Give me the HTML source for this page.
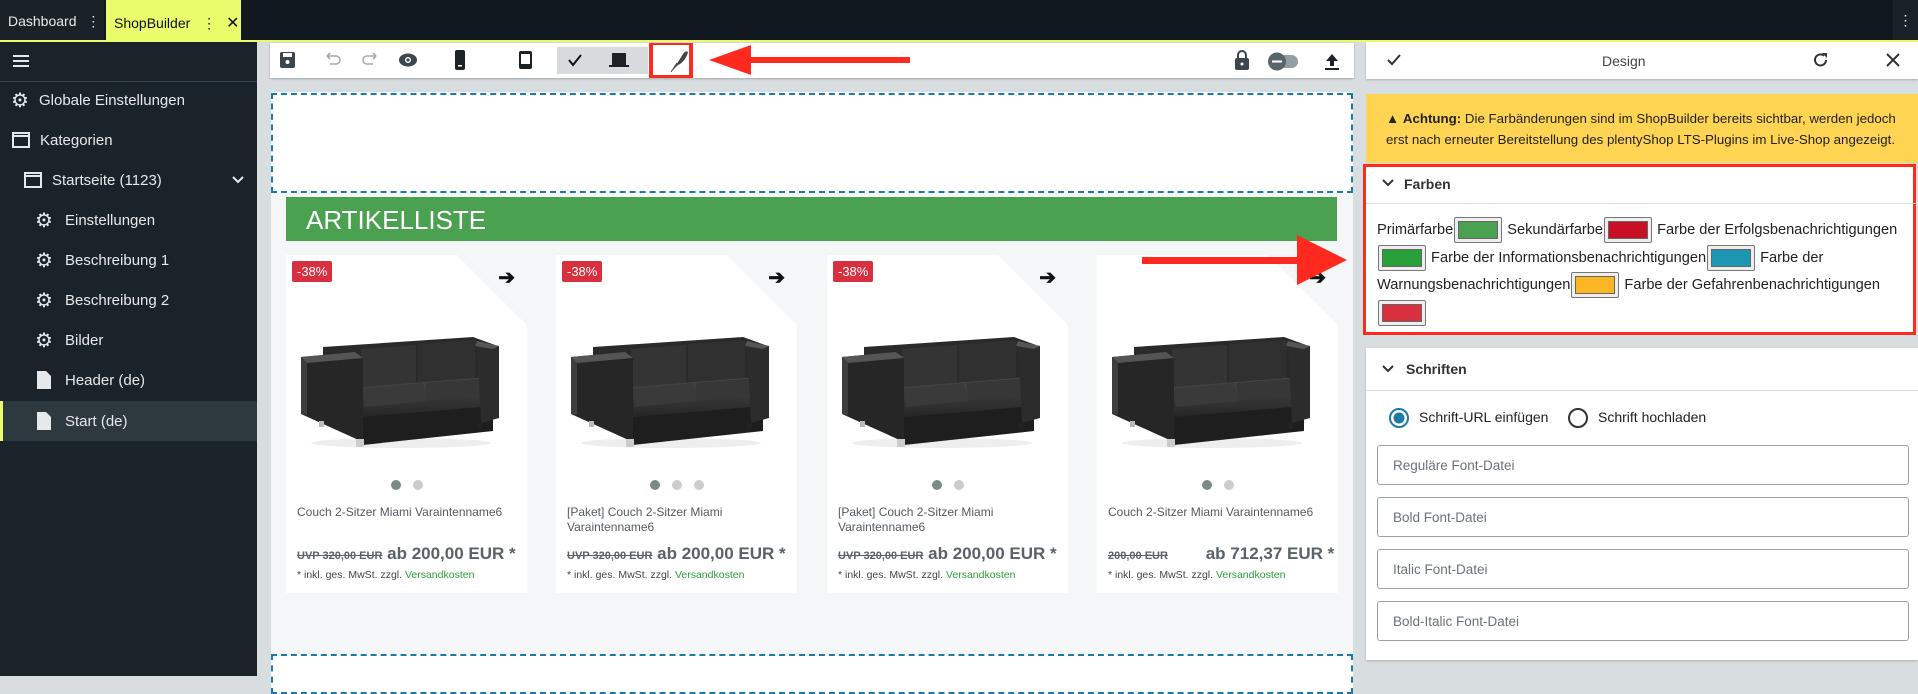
<!DOCTYPE html>
<html><head><meta charset="utf-8"><style>
*{box-sizing:border-box;margin:0;padding:0}
body{width:1918px;height:676px;overflow:hidden;background:#d8dde0;font-family:"Liberation Sans",sans-serif;position:relative}
.abs{position:absolute}
.top{left:0;top:0;width:1918px;height:40px;background:#121820}
.yl{left:0;top:40px;width:1918px;height:2px;background:#e9fb6a}
.side{left:0;top:42px;width:257px;height:634px;background:#1b232a;color:#e6e9eb;font-size:15px}
.it{position:absolute;left:0;width:257px;height:40px;display:flex;align-items:center}
.it svg{flex:none}
.card{position:absolute;top:255px;width:241px;height:338px;background:#fff;overflow:hidden}
.card .corner{position:absolute;right:0;top:0;width:0;height:0;border-top:70px solid #f5f6f8;border-left:70px solid transparent}
.badge{position:absolute;left:6px;top:6px;background:#d9303f;color:#fff;font-size:13px;padding:3px 5px;border-radius:2px}
.arr{position:absolute;right:12px;top:10px;font-size:20px;font-weight:bold;color:#111}
.ttl{position:absolute;left:11px;top:250px;width:225px;font-size:12px;color:#555b61;line-height:15px}
.pr{position:absolute;left:11px;top:289px;font-size:17px;font-weight:bold;color:#5a6168;white-space:nowrap}
.pr s{font-size:11px;color:#5a6168}
.nt{position:absolute;left:11px;top:314px;font-size:10.5px;color:#444}
.nt span{color:#2e9f3a}
.dots{position:absolute;top:222px;left:0;width:241px;text-align:center}
.dots i{display:inline-block;width:10px;height:10px;border-radius:50%;background:#ccc;margin:0 6px}
.dots i:first-child{background:#7b8b86}
.rp{font-family:"Liberation Sans",sans-serif}
.sw{display:inline-block;width:48px;height:26px;border:1px solid #777;background:#eee;border-radius:2px;vertical-align:middle;padding:3px;margin:0 1px}
.sw b{display:block;width:100%;height:100%;border:1px solid #666}
.inp{position:absolute;left:1377px;width:532px;height:40px;border:1px solid #9aa3a9;border-radius:3px;background:#fff;font-size:13.5px;color:#6b7378;padding:12px 15px}
</style></head><body>
<div class="abs top"></div>
<div class="abs" style="left:0;top:0;width:104px;height:40px;background:#1a2228;color:#e6e9eb;font-size:14px;padding:13px 0 0 8px">Dashboard <span style="margin-left:6px">⋮</span></div>
<div class="abs" style="left:106px;top:0;width:135px;height:40px;background:#eafb6b;color:#111;font-size:14px;padding:13px 0 0 8px">ShopBuilder <span style="margin-left:8px">⋮</span><span style="margin-left:10px;font-size:16px">✕</span></div>
<div class="abs" style="left:1893px;top:0;width:25px;height:40px;background:#1a2228;color:#fff;font-size:14px;text-align:center;padding-top:12px">⋮</div>
<div class="abs yl"></div>
<div class="abs side">
 <div style="height:40px;border-bottom:1px solid #3a444c;padding:11px 0 0 12px"><svg width="18" height="16"><path d="M1 3h16M1 8h16M1 13h16" stroke="#e6e9eb" stroke-width="2"/></svg></div>
 <div class="it" style="top:38px"><span style="margin-left:11px;font-size:20px;width:28px">⚙</span>Globale Einstellungen</div>
 <div class="it" style="top:78px"><svg style="margin:0 10px 0 12px" width="18" height="16"><rect x="1" y="1" width="16" height="14" fill="none" stroke="#e6e9eb" stroke-width="2"/><path d="M1 4h16" stroke="#e6e9eb" stroke-width="2"/></svg>Kategorien</div>
 <div class="it" style="top:118px"><svg style="margin:0 10px 0 24px" width="18" height="16"><rect x="1" y="1" width="16" height="14" fill="none" stroke="#e6e9eb" stroke-width="2"/><path d="M1 4h16" stroke="#e6e9eb" stroke-width="2"/></svg>Startseite (1123)<svg style="position:absolute;left:232px" width="12" height="8"><path d="M1 1l5 5 5-5" stroke="#e6e9eb" stroke-width="2" fill="none"/></svg></div>
 <div class="it" style="top:158px"><span style="margin-left:35px;font-size:20px;width:30px">⚙</span>Einstellungen</div>
 <div class="it" style="top:198px"><span style="margin-left:35px;font-size:20px;width:30px">⚙</span>Beschreibung 1</div>
 <div class="it" style="top:238px"><span style="margin-left:35px;font-size:20px;width:30px">⚙</span>Beschreibung 2</div>
 <div class="it" style="top:278px"><span style="margin-left:35px;font-size:20px;width:30px">⚙</span>Bilder</div>
 <div class="it" style="top:318px"><svg style="margin:0 14px 0 37px" width="14" height="18"><path d="M0 0h9l5 5v13H0z" fill="#e6e9eb"/></svg>Header (de)</div>
 <div class="it" style="top:359px;background:#2e383f;border-left:3px solid #e9fb6a"><svg style="margin:0 14px 0 34px" width="14" height="18"><path d="M0 0h9l5 5v13H0z" fill="#e6e9eb"/></svg>Start (de)</div>
</div>
<!-- toolbar -->
<div class="abs" style="left:270px;top:43px;width:1084px;height:35px;background:#fff;box-shadow:0 1px 2px rgba(0,0,0,.25)"></div>
<svg class="abs" style="left:270px;top:43px" width="1084" height="35">
 <rect x="10" y="9" width="15" height="16" rx="2" fill="#3d464d"/><rect x="13" y="10" width="9" height="4" fill="#fff"/><circle cx="17.5" cy="19" r="2" fill="#fff"/>
 <path d="M57 13h9a4 4 0 010 8h-6M57 13l3-3M57 13l3 3" stroke="#aaa" stroke-width="1.6" fill="none"/>
 <path d="M106 13h-9a4 4 0 000 8h6M106 13l-3-3M106 13l-3 3" stroke="#aaa" stroke-width="1.6" fill="none"/>
 <ellipse cx="138" cy="17" rx="9" ry="6.5" fill="#3d464d"/><circle cx="138" cy="17" r="3" fill="#fff"/><circle cx="138" cy="17" r="1.6" fill="#3d464d"/>
 <rect x="185" y="7" width="10" height="20" rx="2" fill="#1c2227"/><rect x="188" y="22" width="4" height="1.5" fill="#fff"/>
 <rect x="249" y="8" width="13" height="18" rx="2" fill="#1c2227"/><rect x="251" y="11" width="9" height="10" fill="#fff"/>
 <rect x="287" y="4" width="91" height="27" fill="#d7dbde"/>
 <path d="M299 17l4 5 8-10" stroke="#111" stroke-width="2" fill="none"/>
 <rect x="342" y="10" width="14" height="12" fill="#1c2227"/><rect x="339" y="22" width="20" height="2" fill="#1c2227"/>
 <path d="M403 27l10-16c2-3 4-3 5-2-1 5-5 11-10 13z" fill="#3d464d"/><path d="M401 29l6-9" stroke="#3d464d" stroke-width="1"/>
 <rect x="381" y="0" width="40" height="34" fill="none" stroke="#ff2a1f" stroke-width="4"/>
 <path d="M439 17l42-15v30z" fill="#ff2a1f"/><rect x="475" y="14" width="165" height="6" fill="#ff2a1f"/>
 <rect x="965" y="15" width="14" height="12" rx="2" fill="#3d464d"/><path d="M968 15v-3a4 4 0 018 0v3" stroke="#3d464d" stroke-width="2" fill="none"/><circle cx="972" cy="21" r="1.5" fill="#fff"/>
 <rect x="1000" y="12" width="28" height="13" rx="6.5" fill="#939da3"/><circle cx="1007" cy="18.5" r="9" fill="#5a646b"/><rect x="1002" y="17.5" width="10" height="2" fill="#fff"/>
 <path d="M1062 11l-6 7h4v5h4v-5h4z" fill="#1c2227"/><rect x="1055" y="25" width="14" height="2" fill="#1c2227"/>
</svg>
<!-- canvas -->
<div class="abs" style="left:271px;top:92px;width:1082px;height:584px;background:#f5f6f8"></div>
<div class="abs" style="left:271px;top:93px;width:1082px;height:100px;background:#fff;border:2px dashed #1b7aa8"></div>
<div class="abs" style="left:286px;top:197px;width:1051px;height:44px;background:#4aa150;color:#fff;font-size:26px;padding:8px 0 0 20px">ARTIKELLISTE</div>
<svg width="0" height="0" style="position:absolute"><defs>
<linearGradient id="gf" x1="0" y1="0" x2="0" y2="1"><stop offset="0" stop-color="#4a4a4a"/><stop offset="1" stop-color="#1c1c1c"/></linearGradient>
<g id="sofa">
 <ellipse cx="100" cy="118" rx="90" ry="5" fill="#eee"/>
 <path d="M22 22l150-10 22 8v62l-172 14z" fill="#2a2a2a"/>
 <path d="M60 24l55-4v38l-55 4z" fill="#343434"/><path d="M117 19l57-4v40l-57 3z" fill="#303030"/>
 <path d="M60 62l128-10 7 4v34l-135 12z" fill="url(#gf)"/>
 <path d="M62 64l60-6 4 18-62 6z" fill="#3a3a3a"/><path d="M124 58l62-5 4 16-63 6z" fill="#373737"/>
 <path d="M62 92l130-11v25l-130 14z" fill="#1e1e1e"/>
 <path d="M176 16l22 5v72l-18 5z" fill="#2c2c2c"/><path d="M176 16l22 5-6 3-18-3z" fill="#555"/>
 <path d="M0 32l54-5 8 6v84l-62-28z" fill="#262626"/><path d="M0 32l54-5 8 6-56 5z" fill="#555"/><path d="M0 33l6 5v52l-6-1z" fill="#3e3e3e"/>
 <rect x="55" y="114" width="8" height="8" fill="#ccc"/><rect x="18" y="96" width="5" height="6" fill="#bbb"/><rect x="176" y="98" width="5" height="6" fill="#222"/>
</g></defs></svg>
<div class="card" style="left:286px"><div class="corner"></div><div class="badge">-38%</div><div class="arr">➔</div><svg class="abs" style="left:15px;top:70px" width="205" height="128"><use href="#sofa"/></svg><div class="dots"><i></i><i></i></div><div class="ttl">Couch 2-Sitzer Miami Varaintenname6</div><div class="pr"><s>UVP 320,00 EUR</s> ab 200,00 EUR *</div><div class="nt">* inkl. ges. MwSt. zzgl. <span>Versandkosten</span></div></div>
<div class="card" style="left:556px"><div class="corner"></div><div class="badge">-38%</div><div class="arr">➔</div><svg class="abs" style="left:15px;top:70px" width="205" height="128"><use href="#sofa"/></svg><div class="dots"><i></i><i></i><i></i></div><div class="ttl">[Paket] Couch 2-Sitzer Miami Varaintenname6</div><div class="pr"><s>UVP 320,00 EUR</s> ab 200,00 EUR *</div><div class="nt">* inkl. ges. MwSt. zzgl. <span>Versandkosten</span></div></div>
<div class="card" style="left:827px"><div class="corner"></div><div class="badge">-38%</div><div class="arr">➔</div><svg class="abs" style="left:15px;top:70px" width="205" height="128"><use href="#sofa"/></svg><div class="dots"><i></i><i></i></div><div class="ttl">[Paket] Couch 2-Sitzer Miami Varaintenname6</div><div class="pr"><s>UVP 320,00 EUR</s> ab 200,00 EUR *</div><div class="nt">* inkl. ges. MwSt. zzgl. <span>Versandkosten</span></div></div>
<div class="card" style="left:1097px"><div class="corner"></div><div class="arr">➔</div><svg class="abs" style="left:15px;top:70px" width="205" height="128"><use href="#sofa"/></svg><div class="dots"><i></i><i></i></div><div class="ttl">Couch 2-Sitzer Miami Varaintenname6</div><div class="pr"><s>200,00 EUR</s>&nbsp;&nbsp;&nbsp;&nbsp;&nbsp;&nbsp;&nbsp; ab 712,37 EUR *</div><div class="nt">* inkl. ges. MwSt. zzgl. <span>Versandkosten</span></div></div>
<div class="abs" style="left:271px;top:654px;width:1082px;height:40px;background:#fff;border:2px dashed #1b7aa8"></div>
<svg class="abs" style="left:1140px;top:234px" width="210" height="52"><rect x="2" y="23" width="160" height="7" fill="#ff2a1f"/><path d="M157 1l50 25-50 25z" fill="#ff2a1f"/></svg>
<!-- right panel -->
<div class="abs rp" style="left:1366px;top:42px;width:552px;height:37px;background:#fff;box-shadow:0 1px 2px rgba(0,0,0,.2);font-size:14px;color:#444">
 <svg class="abs" style="left:20px;top:11px" width="16" height="14"><path d="M2 7l4 4 8-9" stroke="#333" stroke-width="2" fill="none"/></svg>
 <div class="abs" style="left:236px;top:11px">Design</div>
 <svg class="abs" style="left:447px;top:10px" width="16" height="16"><path d="M13 8a5.5 5.5 0 11-2-4.3" stroke="#333" stroke-width="2" fill="none"/><path d="M9 1h5v5z" fill="#333"/></svg>
 <svg class="abs" style="left:520px;top:11px" width="14" height="14"><path d="M1 1l12 12M13 1L1 13" stroke="#333" stroke-width="2"/></svg>
</div>
<div class="abs rp" style="left:1366px;top:94px;width:552px;height:69px;background:#fed452;font-size:13.3px;color:#222;padding:14px 0 0 20px;line-height:21px">▲ <b>Achtung:</b> Die Farbänderungen sind im ShopBuilder bereits sichtbar, werden jedoch<br>erst nach erneuter Bereitstellung des plentyShop LTS-Plugins im Live-Shop angezeigt.</div>
<div class="abs rp" style="left:1363px;top:164px;width:553px;height:171px;background:#fff;border:3px solid #ff2a1f"></div>
<div class="abs" style="left:1366px;top:203px;width:550px;height:1px;background:#ddd"></div>
<svg class="abs" style="left:1381px;top:178px" width="14" height="10"><path d="M2 2l5 5 5-5" stroke="#333" stroke-width="2" fill="none"/></svg>
<div class="abs rp" style="left:1404px;top:176px;font-size:14px;color:#333;font-weight:bold">Farben</div>
<div class="abs rp" style="left:1377px;top:217px;width:530px;font-size:14.6px;color:#222;line-height:27.5px">Primärfarbe<span class="sw"><b style="background:#4aa150"></b></span> Sekundärfarbe<span class="sw"><b style="background:#c81023"></b></span> Farbe der Erfolgsbenachrichtigungen <span class="sw"><b style="background:#2aa03b"></b></span> Farbe der Informationsbenachrichtigungen<span class="sw"><b style="background:#1c96b1"></b></span> Farbe der Warnungsbenachrichtigungen<span class="sw"><b style="background:#fbb624"></b></span> Farbe der Gefahrenbenachrichtigungen <span class="sw"><b style="background:#d9303f"></b></span></div>
<div class="abs" style="left:1366px;top:348px;width:552px;height:312px;background:#fff;box-shadow:0 1px 2px rgba(0,0,0,.2)"></div>
<div class="abs" style="left:1366px;top:390px;width:552px;height:1px;background:#ddd"></div>
<svg class="abs" style="left:1381px;top:364px" width="14" height="10"><path d="M2 2l5 5 5-5" stroke="#333" stroke-width="2" fill="none"/></svg>
<div class="abs rp" style="left:1406px;top:361px;font-size:14px;color:#333;font-weight:bold">Schriften</div>
<svg class="abs" style="left:1388px;top:407px" width="22" height="22"><circle cx="11" cy="11" r="9" fill="none" stroke="#1b7aa8" stroke-width="2"/><circle cx="11" cy="11" r="5.5" fill="#1b7aa8"/></svg>
<div class="abs rp" style="left:1419px;top:409px;font-size:14px;color:#222">Schrift-URL einfügen</div>
<svg class="abs" style="left:1567px;top:407px" width="22" height="22"><circle cx="11" cy="11" r="9" fill="none" stroke="#333" stroke-width="2"/></svg>
<div class="abs rp" style="left:1598px;top:409px;font-size:14px;color:#222">Schrift hochladen</div>
<div class="inp" style="top:445px">Reguläre Font-Datei</div>
<div class="inp" style="top:497px">Bold Font-Datei</div>
<div class="inp" style="top:549px">Italic Font-Datei</div>
<div class="inp" style="top:601px">Bold-Italic Font-Datei</div>
</body></html>
